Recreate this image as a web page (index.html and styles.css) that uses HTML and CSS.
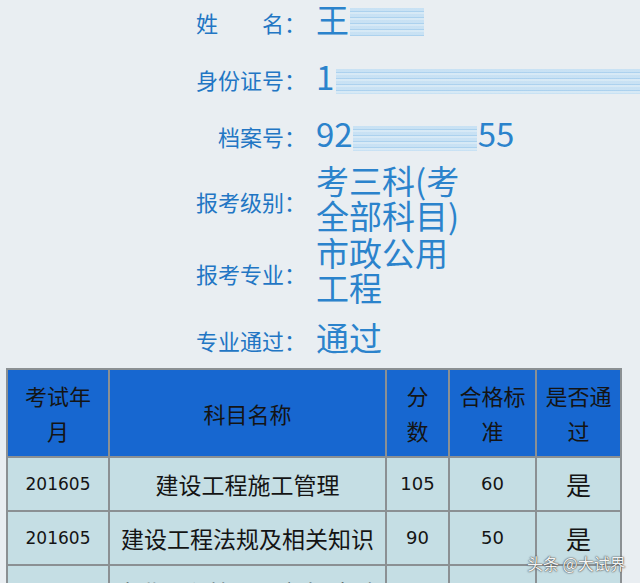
FILE: index.html
```html
<!DOCTYPE html>
<html lang="zh-CN">
<head>
<meta charset="utf-8">
<title>成绩查询</title>
<link rel="stylesheet" href="styles.css">
</head>
<body>
<div class="page">
  <div class="info">
    <div class="row">
      <div class="label">姓&emsp;&emsp;名：</div>
      <div class="value nowrap">王<span class="blur blur-name"></span></div>
    </div>
    <div class="row">
      <div class="label">身份证号：</div>
      <div class="value nowrap">1<span class="blur blur-id"></span></div>
    </div>
    <div class="row">
      <div class="label">档案号：</div>
      <div class="value nowrap">92<span class="blur blur-file"></span>55</div>
    </div>
    <div class="row tall">
      <div class="label">报考级别：</div>
      <div class="value">考三科(考全部科目)</div>
    </div>
    <div class="row tall">
      <div class="label">报考专业：</div>
      <div class="value">市政公用工程</div>
    </div>
    <div class="row last">
      <div class="label">专业通过：</div>
      <div class="value">通过</div>
    </div>
  </div>

  <table class="scores">
    <colgroup>
      <col class="c-date">
      <col class="c-name">
      <col class="c-score">
      <col class="c-pass">
      <col class="c-ok">
    </colgroup>
    <thead>
      <tr>
        <th>考试年<br>月</th>
        <th>科目名称</th>
        <th>分<br>数</th>
        <th>合格标<br>准</th>
        <th>是否通<br>过</th>
      </tr>
    </thead>
    <tbody>
      <tr>
        <td class="date">201605</td>
        <td class="subject">建设工程施工管理</td>
        <td class="num">105</td>
        <td class="num">60</td>
        <td class="yes">是</td>
      </tr>
      <tr>
        <td class="date">201605</td>
        <td class="subject">建设工程法规及相关知识</td>
        <td class="num">90</td>
        <td class="num">50</td>
        <td class="yes">是</td>
      </tr>
      <tr>
        <td class="date">201605</td>
        <td class="subject">专业工程管理与实务(市政公用工程)</td>
        <td class="num">96</td>
        <td class="num">96</td>
        <td class="yes">是</td>
      </tr>
    </tbody>
  </table>

  <div class="watermark">头条 @大试界</div>
</div>
</body>
</html>
```

FILE: styles.css
```css
html, body {
  margin: 0;
  padding: 0;
  overflow: hidden;
}

body {
  background: #e9eef2;
  font-family: "Noto Sans CJK SC", "Noto Sans", sans-serif;
  width: 640px;
  height: 583px;
}

.page {
  position: relative;
  width: 640px;
  height: 583px;
  overflow: hidden;
}

.info {
  margin-top: -9px;
  display: flex;
  flex-direction: column;
}

.row {
  display: flex;
  align-items: center;
  height: 57px;
}

.row.tall {
  height: 72px;
}

.row.last {
  height: 62px;
}

.label {
  width: 306px;
  flex: none;
  text-align: right;
  font-size: 22px;
  color: #2276c4;
  padding-top: 5px;
  white-space: nowrap;
}

.value {
  margin-left: 10px;
  width: 155px;
  font-size: 33px;
  line-height: 35px;
  color: #2b83cc;
}

.value.nowrap {
  white-space: nowrap;
  width: auto;
}

.blur {
  display: inline-block;
  vertical-align: middle;
  background: repeating-linear-gradient(to bottom,
      #c7e1f4 0, #c7e1f4 3px,
      #a9d0ee 3px, #a9d0ee 4px,
      #d6e9f6 4px, #d6e9f6 6px);
  opacity: 0.95;
}

.blur-name {
  width: 74px;
  height: 28px;
  margin-left: 1px;
  margin-top: -4px;
}

.blur-id {
  width: 320px;
  height: 25px;
  margin-left: 2px;
}

.blur-file {
  width: 124px;
  height: 25px;
  margin-left: 0;
  margin-right: 1px;
}

.scores {
  margin-left: 6px;
  width: 614px;
  border-collapse: collapse;
  table-layout: fixed;
}

.c-date { width: 102px; }
.c-name { width: 277px; }
.c-score { width: 63px; }
.c-pass { width: 87px; }
.c-ok { width: 85px; }

.scores th,
.scores td {
  border: 2px solid #8b9093;
  text-align: center;
  color: #141414;
}

.scores th {
  background: #1767d0;
  font-weight: normal;
  font-size: 22px;
  line-height: 35px;
  padding: 8px 0;
}

.scores td {
  background: #c5dee4;
  padding: 11px 0;
  line-height: 30px;
  height: 30px;
}

.scores td.date {
  font-family: "DejaVu Sans", sans-serif;
  font-size: 17px;
}

.scores td.num {
  font-family: "DejaVu Sans", sans-serif;
  font-size: 18px;
}

.scores td.subject {
  font-size: 23px;
}

.scores td.yes {
  font-size: 25px;
}

.watermark {
  position: absolute;
  left: 527px;
  top: 551px;
  font-size: 16px;
  color: #f4f4f4;
  white-space: nowrap;
  text-shadow: 0 0 1px #333, 0 0 2px #555;
}
```
